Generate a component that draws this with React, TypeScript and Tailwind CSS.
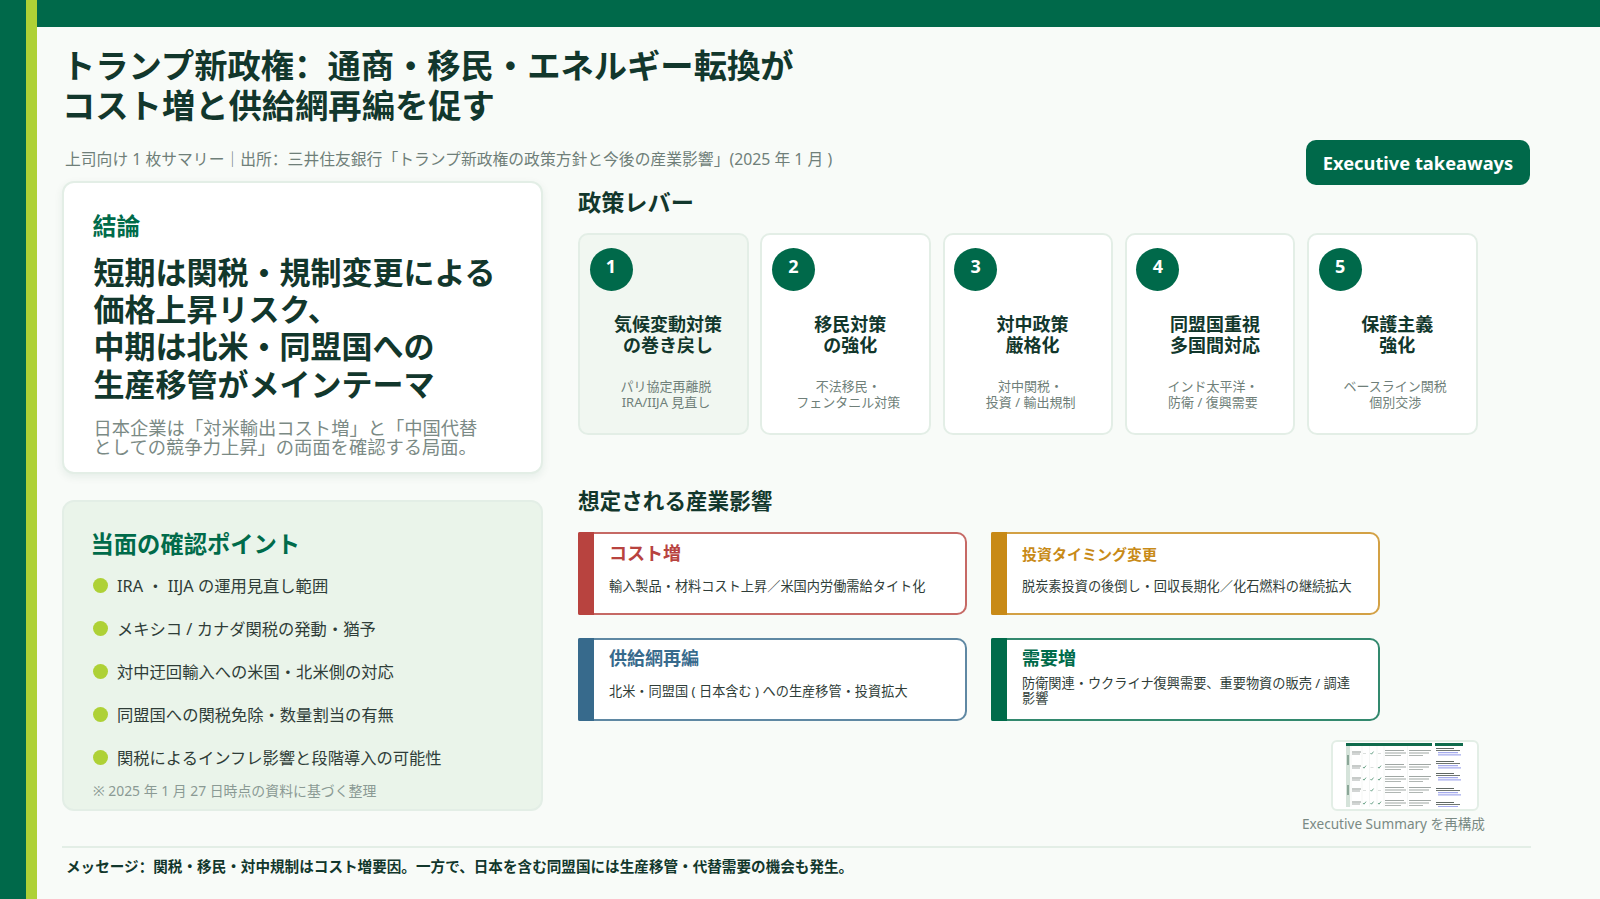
const levers = [
  { n: "1", title: ["気候変動対策", "の巻き戻し"], sub: ["パリ協定再離脱", "IRA/IIJA 見直し"], on: true },
  { n: "2", title: ["移民対策", "の強化"], sub: ["不法移民・", "フェンタニル対策"], on: false },
  { n: "3", title: ["対中政策", "厳格化"], sub: ["対中関税・", "投資 / 輸出規制"], on: false },
  { n: "4", title: ["同盟国重視", "多国間対応"], sub: ["インド太平洋・", "防衛 / 復興需要"], on: false },
  { n: "5", title: ["保護主義", "強化"], sub: ["ベースライン関税", "個別交渉"], on: false },
]

const checks = [
  "IRA ・ IIJA の運用見直し範囲",
  "メキシコ / カナダ関税の発動・猶予",
  "対中迂回輸入への米国・北米側の対応",
  "同盟国への関税免除・数量割当の有無",
  "関税によるインフレ影響と段階導入の可能性",
]

const impacts = [
  { title: "コスト増", text: "輸入製品・材料コスト上昇／米国内労働需給タイト化", box: "border-[#b8433f]/80 before:bg-[#b8433f]", color: "text-[#b8433f] text-[18px]", tw: "mt-[12px]" },
  { title: "投資タイミング変更", text: "脱炭素投資の後倒し・回収長期化／化石燃料の継続拡大", box: "border-[#c88a17]/80 before:bg-[#c88a17]", color: "text-[#c88a17] text-[15px] mt-[1px]", tw: "mt-[11px]" },
  { title: "供給網再編", text: "北米・同盟国 ( 日本含む ) への生産移管・投資拡大", box: "border-[#376a8c]/80 before:bg-[#376a8c]", color: "text-[#376a8c] text-[18px] -mt-[1px]", tw: "mt-[12px]" },
  { title: "需要増", text: "防衛関連・ウクライナ復興需要、重要物資の販売 / 調達影響", box: "border-[#006b4a]/80 before:bg-[#006b4a]", color: "text-[#006b4a] text-[18px] -mt-[1px]", tw: "mt-[4px]" },
]

function Thumb() {
  const rows = [
    { y: 10, marks: [0, 1, 0] },
    { y: 24, marks: [1, 0, 1] },
    { y: 36, marks: [1, 1, 1] },
    { y: 47, marks: [0, 1, 0] },
    { y: 60, marks: [1, 1, 1] },
  ]
  const side = [5, 18, 30, 45, 59]
  return (
    <svg viewBox="0 0 118 64" className="w-[118px] h-[64px] blur-[0.5px]">
      <rect x="0" y="0" width="86" height="3" fill="#0f6b4c" />
      <rect x="89" y="0" width="28" height="3" fill="#0f6b4c" />
      <rect x="0" y="3" width="4" height="61" fill="#d5e3da" />
      <rect x="1" y="12" width="2" height="10" fill="#8ba697" />
      <rect x="1" y="42" width="2" height="10" fill="#8ba697" />
      {rows.map((r) => (
        <g key={r.y} transform={`translate(0 ${r.y})`}>
          <rect x="6" y="-1.5" width="9" height="1" fill="#8f9794" />
          <rect x="6" y="0.5" width="8" height="1" fill="#a5aca9" />
          {r.marks.map((m, i) =>
            m ? (
              <path key={i} d={`M${17 + i * 7.5} 0l1 1.2l2 -2.6`} fill="none" stroke="#4d8f70" strokeWidth="0.8" />
            ) : (
              <rect key={i} x={17 + i * 7.5} y="0" width="3" height="0.6" fill="#c4cac7" />
            )
          )}
          <rect x="39" y="-3" width="19" height="1" fill="#a0a7a4" />
          <rect x="39" y="-0.5" width="21" height="1" fill="#a0a7a4" />
          <rect x="39" y="2" width="16" height="1" fill="#b0b6b3" />
          <rect x="63" y="-3" width="22" height="1" fill="#a0a7a4" />
          <rect x="63" y="-0.5" width="20" height="1" fill="#a0a7a4" />
          <rect x="63" y="2" width="14" height="1" fill="#b0b6b3" />
        </g>
      ))}
      {side.map((y) => (
        <g key={y} transform={`translate(90 ${y})`}>
          <rect x="0" y="0" width="18" height="1" fill="#5f6763" />
          <rect x="0" y="2" width="24" height="1" fill="#6f7672" />
          <rect x="2" y="4.2" width="20" height="1" fill="#8f97e8" />
          <rect x="2" y="6.4" width="23" height="1" fill="#8f97e8" />
        </g>
      ))}
      <line x1="5" y1="3" x2="5" y2="64" stroke="#e3e8e5" strokeWidth="0.4" />
      <line x1="16" y1="3" x2="16" y2="64" stroke="#e3e8e5" strokeWidth="0.4" />
      <line x1="23.5" y1="3" x2="23.5" y2="64" stroke="#e3e8e5" strokeWidth="0.4" />
      <line x1="31" y1="3" x2="31" y2="64" stroke="#e3e8e5" strokeWidth="0.4" />
      <line x1="38" y1="3" x2="38" y2="64" stroke="#e3e8e5" strokeWidth="0.4" />
      <line x1="61.5" y1="3" x2="61.5" y2="64" stroke="#e3e8e5" strokeWidth="0.4" />
    </svg>
  )
}

export default function App() {
  return (
    <div className="flex h-[899px] w-[1600px] overflow-hidden bg-[#f8fbf8] text-[#12372c] font-['Noto_Sans','Noto_Sans_CJK_SC',sans-serif]">
      <div className="w-[26px] bg-[#00694a]" />
      <div className="w-[11px] bg-[#aed136]" />
      <div className="flex-1 flex flex-col">
        <div className="h-[27px] bg-[#00694a]" />

        <div className="pl-[26px] pr-[70px] h-[154px] flex justify-between">
          <div>
            <h1 className="mt-[18px] -ml-[1px] text-[33.3px] leading-[40px] font-bold">
              トランプ新政権：通商・移民・エネルギー転換が<br />コスト増と供給網再編を促す
            </h1>
            <div className="mt-[22px] ml-[2px] text-[15.8px] leading-[24px] text-[#6f7f79]">
              上司向け 1 枚サマリー｜出所：三井住友銀行「トランプ新政権の政策方針と今後の産業影響」(2025 年 1 月 )
            </div>
          </div>
          <div className="self-end -mb-[4px] w-[224px] h-[45px] rounded-[10px] bg-[#00694a] text-white text-[18.3px] font-bold flex items-center justify-center">
            Executive takeaways
          </div>
        </div>

        <div className="pl-[24.5px] flex flex-1">
          <div className="w-[481.5px] shrink-0">
            <div className="h-[293px] rounded-[12px] bg-white border-2 border-[#e3eee6] shadow-[0_3px_8px_rgba(0,80,50,0.08)] pt-[25px] pl-[29px]">
              <div className="text-[24px] leading-[36px] font-bold text-[#006b4a]">結論</div>
              <div className="mt-[10px] ml-[1px] text-[31px] leading-[37.2px] font-bold">
                短期は関税・規制変更による<br />価格上昇リスク、<br />中期は北米・同盟国への<br />生産移管がメインテーマ
              </div>
              <div className="mt-[15px] ml-[1px] text-[18.3px] leading-[19px] text-[#7b8a85]">
                日本企業は「対米輸出コスト増」と「中国代替<br />としての競争力上昇」の両面を確認する局面。
              </div>
            </div>
            <div className="mt-[26px] h-[311px] rounded-[12px] bg-[#eaf4ea] border-2 border-[#e3eee6] pt-[24px] pl-[27px]">
              <div className="text-[23.3px] leading-[36px] font-bold text-[#006b4a]">当面の確認ポイント</div>
              <div className="mt-[12px] ml-[2.5px] flex flex-col gap-[19px]">
                {checks.map((c) => (
                  <div key={c} className="flex items-center h-[24px] text-[16.3px] text-[#2f3d38]">
                    <span className="w-[15px] h-[15px] rounded-full bg-[#aed136] -mt-[2px] mr-[9px]" />
                    {c}
                  </div>
                ))}
              </div>
              <div className="mt-[11px] ml-[2.5px] text-[13.9px] leading-[20px] text-[#8a9a94]">※ 2025 年 1 月 27 日時点の資料に基づく整理</div>
            </div>
          </div>

          <div className="ml-[35px] flex-1">
            <div className="mt-[5px] text-[23.2px] leading-[33px] font-bold">政策レバー</div>
            <div className="mt-[14px] flex gap-[11.8px]">
              {levers.map((l) => (
                <div key={l.n} className={`w-[170.5px] h-[202px] rounded-[10px] border-2 border-[#e3eee6] pt-[13px] pl-[9.5px] ${l.on ? "bg-[#f1f7f1]" : "bg-white"}`}>
                  <div className="w-[43px] h-[43px] rounded-full bg-[#00694a] text-white text-[18px] font-bold flex items-center justify-center pb-[6px]">
                    {l.n}
                  </div>
                  <div className="mt-[22.5px] text-center text-[18px] leading-[21.5px] font-bold">
                    {l.title.map((t) => <div key={t}>{t}</div>)}
                  </div>
                  <div className="mt-[21px] pr-[4px] text-center text-[13px] leading-[16px] text-[#6f7f79]">
                    {l.sub.map((t) => <div key={t}>{t}</div>)}
                  </div>
                </div>
              ))}
            </div>

            <div className="mt-[48.5px] text-[21.6px] leading-[33px] font-bold">想定される産業影響</div>
            <div className="mt-[15px] grid grid-cols-[388.5px_388.5px] gap-x-[24.5px] gap-y-[23px]">
              {impacts.map((b) => (
                <div key={b.title} className={`relative h-[83px] rounded-r-[10px] rounded-l-[2px] bg-white border-2 pl-[29px] pr-[20px] pt-[6px] before:content-[''] before:absolute before:-left-[2px] before:-top-[2px] before:-bottom-[2px] before:w-[16px] before:rounded-l-[2px] ${b.box}`}>
                  <div className={`font-bold leading-[27px] ${b.color}`}>{b.title}</div>
                  <div className={`text-[13.2px] leading-[15px] text-[#2f3d38] ${b.tw}`}>{b.text}</div>
                </div>
              ))}
            </div>

            <div className="mt-[19px] ml-[724px] w-[190px]">
              <div className="w-[148px] h-[71px] ml-[29px] rounded-[6px] bg-white border-2 border-[#e3eee6] flex justify-center items-center">
                <Thumb />
              </div>
              <div className="mt-[3px] text-[13.6px] leading-[20px] text-[#7a8a84] whitespace-nowrap">Executive Summary を再構成</div>
            </div>
          </div>
        </div>

        <div className="ml-[25px] mr-[69px] h-[53px] border-t-2 border-[#e3eee6] pl-[4px] pt-[8px] text-[14.6px] leading-[20px] font-bold">
          メッセージ：関税・移民・対中規制はコスト増要因。一方で、日本を含む同盟国には生産移管・代替需要の機会も発生。
        </div>
      </div>
    </div>
  )
}
